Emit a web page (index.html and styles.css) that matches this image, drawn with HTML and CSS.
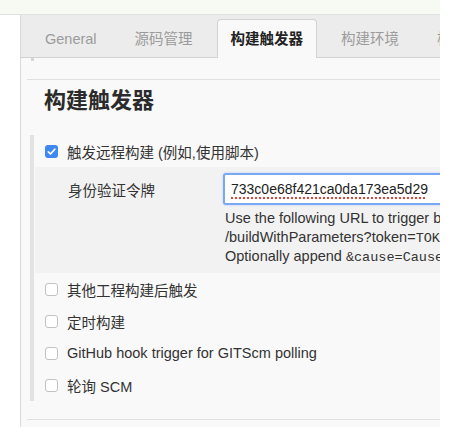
FILE: index.html
```html
<!DOCTYPE html>
<html lang="zh-CN">
<head>
<meta charset="utf-8">
<title>构建触发器</title>
<link rel="stylesheet" href="styles.css">
</head>
<body>
<div class="page">
  <div class="topbar"></div>
  <div class="main">
    <div class="gutter"></div>
    <div class="panel">
      <div class="tabs">
        <div class="tab">General</div>
        <div class="tab">源码管理</div>
        <div class="tab active">构建触发器</div>
        <div class="tab">构建环境</div>
        <div class="tab">构建后操作</div>
      </div>
      <div class="marker"></div>
      <div class="rule"></div>
      <h2 class="heading">构建触发器</h2>
      <div class="section">
        <div class="row">
          <span class="cb checked"><svg width="13" height="13" viewBox="0 0 13 13"><path d="M3.3 6.8 L5.5 9 L9.8 4.2" fill="none" stroke="#fff" stroke-width="1.7" stroke-linecap="round" stroke-linejoin="round"/></svg></span>
          <span class="label">触发远程构建 (例如,使用脚本)</span>
        </div>
        <div class="sub">
          <div class="field">
            <div class="field-label">身份验证令牌</div>
            <div class="input"><span class="misspelled">733c0e68f421ca0da173ea5d29</span></div>
          </div>
          <div class="help">
            <div class="help-line">Use the following URL to trigger build remotely: JENKINS_URL/job/demo/build?token=TOKEN_NAME or</div>
            <div class="help-line">/buildWithParameters?token=<code>TOKEN_NAME</code></div>
            <div class="help-line">Optionally append <code>&amp;cause=Cause+Text</code> to provide text that will be included</div>
          </div>
        </div>
        <div class="row">
          <span class="cb"></span>
          <span class="label">其他工程构建后触发</span>
        </div>
        <div class="row">
          <span class="cb"></span>
          <span class="label">定时构建</span>
        </div>
        <div class="row">
          <span class="cb"></span>
          <span class="label">GitHub hook trigger for GITScm polling</span>
        </div>
        <div class="row">
          <span class="cb"></span>
          <span class="label">轮询 SCM</span>
        </div>
      </div>
      <div class="rule bottom"></div>
    </div>
  </div>
</div>
</body>
</html>
```
FILE: styles.css
```css
html, body {
  margin: 0;
  padding: 0;
  background: #ffffff;
}

body {
  font-family: "Liberation Sans", "Noto Sans CJK SC", sans-serif;
  font-size: 14.5px;
  color: #333333;
}

.page {
  width: 440px;
  height: 427px;
  overflow: hidden;
  background: #ffffff;
}

.topbar {
  height: 14px;
  background: #f7f9f3;
  border-bottom: 1px solid #e1e1e1;
}

.main {
  display: flex;
  height: 412px;
}

.gutter {
  width: 20px;
  flex: none;
  background: #ffffff;
}

.panel {
  flex: 1;
  min-width: 0;
  overflow: hidden;
  background: #f9f9f9;
  border-left: 1px solid #d9d9d9;
}

.tabs {
  height: 42px;
  background: #ececec;
  border-bottom: 1px solid #d2d2d2;
  display: flex;
  align-items: flex-end;
  padding-left: 10px;
  white-space: nowrap;
}

.tab {
  height: 38px;
  line-height: 38px;
  padding: 0 13px;
  margin-right: 10px;
  border: 1px solid transparent;
  border-bottom: none;
  color: #9b9b9b;
  box-sizing: border-box;
  flex: none;
}

.tab.active {
  background: #f9f9f9;
  border-color: #d2d2d2;
  border-radius: 4px 4px 0 0;
  color: #222222;
  font-weight: bold;
  height: 39px;
  margin-bottom: -1px;
  line-height: 39px;
}

.marker {
  width: 3px;
  height: 3px;
  margin-left: 10px;
  background: #d6d6d6;
}

.rule {
  margin: 18px 0 0 6px;
  border-top: 1px solid #e0e0e0;
}

.rule.bottom {
  margin-top: 18px;
}

.heading {
  margin: 6px 0 0 23px;
  font-size: 22px;
  line-height: 30px;
  font-weight: bold;
  color: #2b2b2b;
}

.section {
  margin: 19px 0 0 9px;
  border-left: 4px solid #e3e3e3;
}

.row {
  height: 32px;
  display: flex;
  align-items: center;
  white-space: nowrap;
  padding-left: 11px;
}

.cb {
  width: 13px;
  height: 13px;
  box-sizing: border-box;
  border: 1px solid #c2c2c2;
  border-radius: 3px;
  background: #ffffff;
  flex: none;
  margin-right: 9px;
  display: flex;
}

.cb.checked {
  border: none;
  background: #3f87f2;
}

.label {
  color: #333333;
}

.sub {
  background: #f2f2f2;
  padding: 6px 0 7px 33px;
  margin-left: 1px;
  white-space: nowrap;
}

.field {
  display: flex;
  align-items: center;
  height: 32px;
}

.field-label {
  width: 155px;
  flex: none;
  color: #333333;
}

.input {
  flex: none;
  width: 300px;
  height: 32px;
  box-sizing: border-box;
  border: 2px solid #7aa8f2;
  border-radius: 3px;
  background: #ffffff;
  padding-left: 6px;
  line-height: 28px;
  font-size: 14px;
  color: #222222;
  box-shadow: 0 0 2px #a9c6f5;
}

.misspelled {
  text-decoration: underline dotted #e0433a;
  text-underline-offset: 3px;
  text-decoration-thickness: 1.5px;
}

.help {
  margin: 4px 0 0 157px;
  color: #333333;
}

.help-line {
  height: 19px;
  line-height: 19px;
}

.help code {
  font-family: "Liberation Mono", monospace;
  font-size: 13.5px;
}
```
